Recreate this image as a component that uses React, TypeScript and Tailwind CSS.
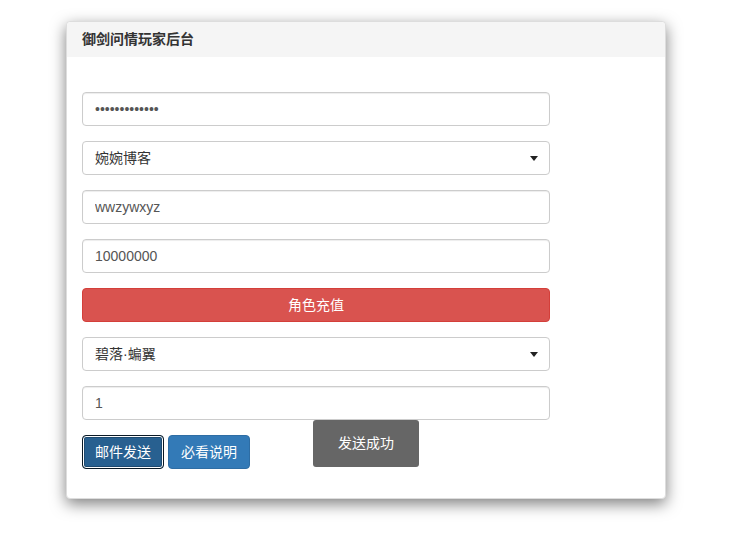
import React from 'react';

const FONT = '"Liberation Sans", Arial, "Noto Sans CJK SC", sans-serif';

function TextInput({ value, type = 'text' }: { value: string; type?: string }) {
  return (
    <input
      type={type}
      value={value}
      readOnly
      className="block w-[468px] h-[34px] px-[12px] border border-[#ccc] rounded-[4px] bg-white text-[14px] text-[#555] outline-none shadow-[inset_0_1px_1px_rgba(0,0,0,0.075)]"
      style={{ fontFamily: FONT }}
    />
  );
}

function FakeSelect({ label }: { label: string }) {
  return (
    <div className="flex items-center justify-between w-[468px] h-[34px] pl-[12px] pr-[11px] border border-[#ccc] rounded-[4px] bg-white text-[14px] text-[#333]">
      <span>{label}</span>
      <span className="w-0 h-0 border-l-[4px] border-r-[4px] border-t-[5px] border-l-transparent border-r-transparent border-t-[#222]" />
    </div>
  );
}

export default function App() {
  return (
    <div className="min-h-[538px] bg-white pt-[21px]" style={{ fontFamily: FONT }}>
      <div className="relative ml-[66px] w-[600px] border border-[#ddd] rounded-[4px] bg-white shadow-[0_5px_15px_rgba(0,0,0,0.5)]">
        {/* Header */}
        <div className="h-[35px] flex items-center px-[15px] bg-[#f5f5f5] rounded-t-[4px] text-[14px] font-bold text-[#333]">
          御剑问情玩家后台
        </div>

        {/* Body */}
        <div className="px-[15px] pt-[35px] pb-[29px] flex flex-col gap-[15px]">
          <TextInput type="password" value="xxxxxxxxxxxxx" />
          <FakeSelect label="婉婉博客" />
          <TextInput value="wwzywxyz" />
          <TextInput value="10000000" />
          <button
            type="button"
            className="w-[468px] h-[34px] rounded-[4px] border border-[#d43f3a] bg-[#d9534f] text-white text-[14px]"
          >
            角色充值
          </button>
          <FakeSelect label="碧落·蝙翼" />
          <TextInput value="1" />
          <div className="flex items-center gap-[4px]">
            <button
              type="button"
              className="w-[82px] h-[34px] rounded-[4px] border border-[#0b1a26] bg-[#286090] text-white text-[14px] shadow-[inset_0_0_0_1px_#fff,inset_0_0_0_2px_#1d4a70]"
            >
              邮件发送
            </button>
            <button
              type="button"
              className="w-[82px] h-[34px] rounded-[4px] border border-[#2e6da4] bg-[#337ab7] text-white text-[14px]"
            >
              必看说明
            </button>
          </div>
        </div>

        {/* Toast */}
        <div className="absolute left-[246px] top-[398px] w-[106px] h-[47px] rounded-[3px] bg-[#666] flex items-center justify-center text-white text-[14px]">
          发送成功
        </div>
      </div>
    </div>
  );
}
